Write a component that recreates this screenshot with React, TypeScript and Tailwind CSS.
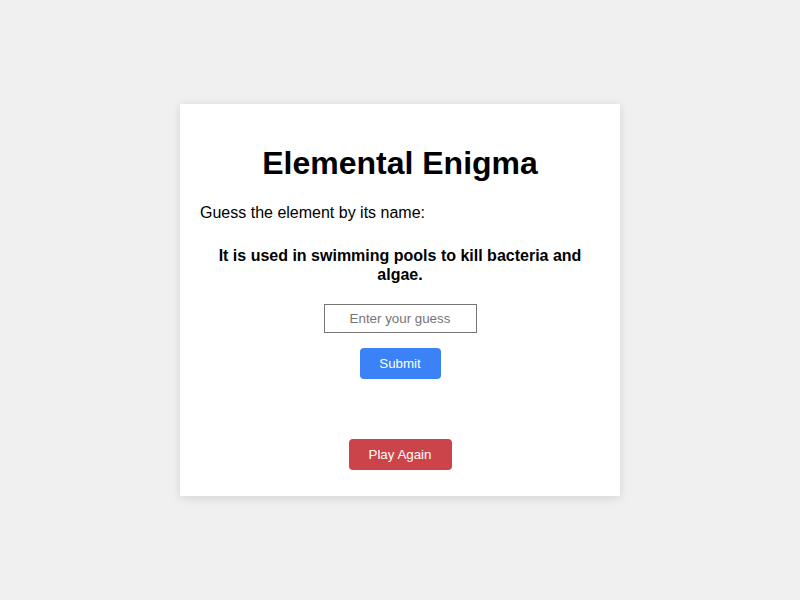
import { useState } from 'react'

export default function App() {
  const [guess, setGuess] = useState('')

  return (
    <div className="flex min-h-screen items-center justify-center bg-[#f0f0f0] font-['Liberation_Sans',Arial,sans-serif] text-black">
      <div className="w-[440px] bg-white px-5 pt-[41px] pb-[26px] text-center shadow-[0_2px_10px_rgba(0,0,0,0.12)]">
        <h1 className="text-[32px] leading-[37px] font-bold">Elemental Enigma</h1>
        <p className="mt-[22px] text-left text-base leading-[18px]">Guess the element by its name:</p>
        <p className="mt-[24px] px-4 text-base leading-[19px] font-bold">
          It is used in swimming pools to kill bacteria and algae.
        </p>
        <div className="mt-[20px] flex flex-col items-center">
          <input
            value={guess}
            onChange={(e) => setGuess(e.target.value)}
            placeholder="Enter your guess"
            className="h-[29px] w-[153px] border border-[#767676] text-center text-[13.33px] placeholder:text-[#757575] outline-none"
          />
          <button className="mt-[15px] h-[31px] w-[81px] rounded-[4px] bg-[#3b82f6] text-[13.33px] text-white">
            Submit
          </button>
          <button className="mt-[60px] h-[31px] w-[103px] rounded-[4px] bg-[#cc4449] text-[13.33px] text-white">
            Play Again
          </button>
        </div>
      </div>
    </div>
  )
}
